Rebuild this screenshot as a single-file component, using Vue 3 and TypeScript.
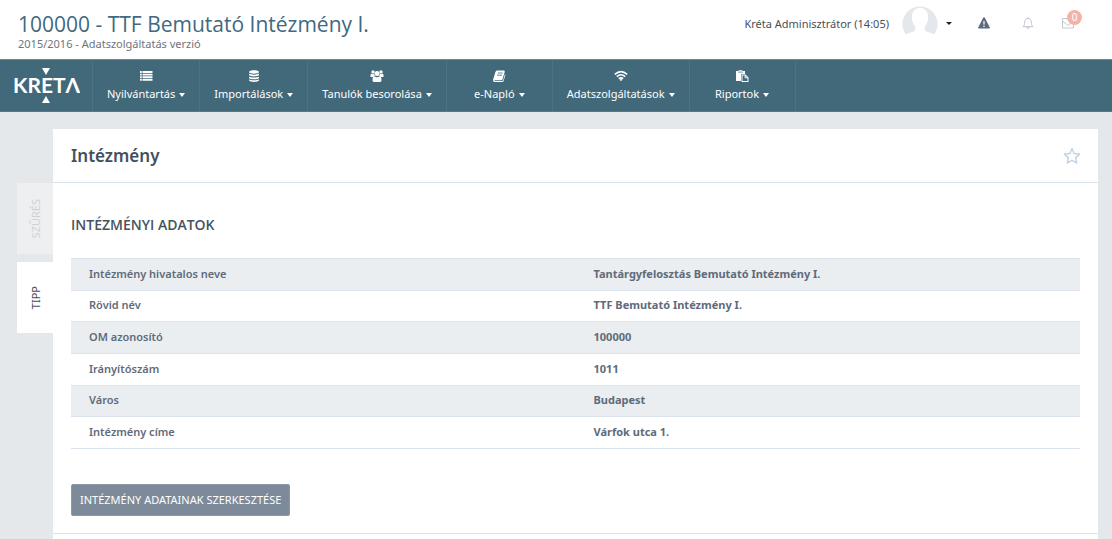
<script setup lang="ts">
interface MenuItem {
  label: string
  icon: string
}
interface Row {
  label: string
  value: string
}

const menu: MenuItem[] = [
  { label: 'Nyilvántartás', icon: 'list' },
  { label: 'Importálások', icon: 'database' },
  { label: 'Tanulók besorolása', icon: 'group' },
  { label: 'e-Napló', icon: 'book' },
  { label: 'Adatszolgáltatások', icon: 'wifi' },
  { label: 'Riportok', icon: 'paste' },
]

const rows: Row[] = [
  { label: 'Intézmény hivatalos neve', value: 'Tantárgyfelosztás Bemutató Intézmény I.' },
  { label: 'Rövid név', value: 'TTF Bemutató Intézmény I.' },
  { label: 'OM azonosító', value: '100000' },
  { label: 'Irányítószám', value: '1011' },
  { label: 'Város', value: 'Budapest' },
  { label: 'Intézmény címe', value: 'Várfok utca 1.' },
]
</script>

<template>
  <div class="page">
    <header class="top">
      <div class="school">
        <h1>100000 - TTF Bemutató Intézmény I.</h1>
        <p>2015/2016 - Adatszolgáltatás verzió</p>
      </div>
      <div class="tools">
        <button type="button" class="user">
          <span>Kréta Adminisztrátor (14:05)</span>
          <svg class="avatar" viewBox="0 0 36 36" aria-hidden="true">
            <path
              fill="#e4e8ed"
              d="M4 29.500A17.500 17.500 0 1 1 32 29.500C29 27.500 24 27 23 25.500C22 24 22.500 22 23.500 20.500C25 18.500 26.500 15 26 10.500C25.500 5.500 22 3 18 3C13.500 3 10.500 5.500 10 10.500C9.500 15 11 18.500 12.500 20.500C13.500 22 14 24 13 25.500C12 27 7 27.500 4 29.500Z"
            />
          </svg>
          <i class="caret dark"></i>
        </button>
        <button type="button" class="tool warn" aria-label="Figyelmeztetések">
          <svg viewBox="0 0 12 12">
            <path fill="#5b6b7d" d="M6 0.300Q6.500 0.300 6.800 0.800L11.800 10.400Q12 11.500 11 11.600H1Q0 11.500 0.200 10.400L5.200 0.800Q5.500 0.300 6 0.300Z" />
            <path fill="#fff" d="M5.200 4.200H6.800L6.500 7.800H5.500ZM5.300 8.700H6.700V10.100H5.300Z" />
          </svg>
        </button>
        <button type="button" class="tool" aria-label="Értesítések">
          <svg viewBox="0 0 12 12" fill="none" stroke="#b9bfc7" stroke-width="0.900">
            <path d="M1 9.700C2.400 8.400 2.700 7 2.700 5C2.700 2.600 4.200 1.500 6 1.500C7.800 1.500 9.300 2.600 9.300 5C9.300 7 9.600 8.400 11 9.700ZM6 0.200V1.500M4.700 9.900Q4.900 11.400 6 11.400Q7.100 11.400 7.300 9.900" />
          </svg>
        </button>
        <button type="button" class="tool mail" aria-label="Üzenetek">
          <svg viewBox="0 0 12 12" fill="none" stroke="#c3c8cf" stroke-width="1">
            <path d="M0.500 1.500H11.500V11H0.500ZM0.500 4L6 8.500L11.500 4" />
          </svg>
          <span class="badge">0</span>
        </button>
      </div>
    </header>

    <nav class="bar">
      <a href="#" class="logo" aria-label="Kréta">
        <svg viewBox="0 0 67 36">
          <path fill="#fff" d="M29 0H37L33 7ZM33 28L37 35H29Z" />
          <text x="0" y="25" class="brand">KRETΛ</text>
        </svg>
      </a>
      <a v-for="item in menu" :key="item.label" href="#" class="item">
        <svg class="glyph" viewBox="0 0 14 12" fill="#fff" aria-hidden="true">
          <path
            v-if="item.icon === 'list'"
            d="M1 1H2.800V3H1ZM3.500 1H13.500V3H3.500ZM1 3.700H2.800V5.500H1ZM3.500 3.700H13.500V5.500H3.500ZM1 6.200H2.800V8H1ZM3.500 6.200H13.500V8H3.500ZM1 8.700H2.800V10.700H1ZM3.500 8.700H13.500V10.700H3.500Z"
          />
          <path
            v-else-if="item.icon === 'database'"
            d="M2 2C2 -0.300 12 -0.300 12 2C12 4.300 2 4.300 2 2ZM2 3.600C3.500 5 10.500 5 12 3.600V5C11.500 6.900 2.500 6.900 2 5ZM2 6.500C3.500 7.900 10.500 7.900 12 6.500V7.900C11.500 9.800 2.500 9.800 2 7.900ZM2 9.300C3.500 10.700 10.500 10.700 12 9.300V10.300C11.500 12.500 2.500 12.500 2 10.300Z"
          />
          <g v-else-if="item.icon === 'group'">
            <circle cx="3" cy="1.900" r="1.700" />
            <circle cx="11" cy="1.900" r="1.700" />
            <circle cx="7" cy="3.500" r="2.500" />
            <path d="M0.500 7V5Q0.700 3.700 1.700 3.800Q3 4.500 4 3.800Q4.300 5.200 4.800 5.900Q3.600 6 3 7ZM13.500 7V5Q13.300 3.700 12.300 3.800Q11 4.500 10 3.800Q9.700 5.200 9.200 5.900Q10.400 6 11 7ZM4.500 6.300Q7 8 9.500 6.300Q11.500 6.500 11.500 10.300Q11.500 12 10 12H4Q2.500 12 2.500 10.300Q2.500 6.500 4.500 6.300Z" />
          </g>
          <g v-else-if="item.icon === 'book'">
            <path d="M5 0.500H12Q13 0.800 12.700 2L10.400 9.500Q10 10.300 9.200 10.300H2.900Q2 10.500 2.500 11H9.900Q10.900 11 11.200 10L13 4Q13.600 4.700 13.200 5.700L11.600 11Q11.200 12 10 12H2.700Q0.800 11.800 1 10L3.400 2Q3.900 0.500 5 0.500Z" />
            <path stroke="#41697a" stroke-width="0.800" d="M5.700 3H10.700M5 5.200H10" />
          </g>
          <g v-else-if="item.icon === 'wifi'">
            <g fill="none" stroke="#fff" stroke-width="1.600">
              <path d="M0.800 4.400Q7 -1.200 13.200 4.400M2.800 6.600Q7 2.900 11.200 6.600M4.800 8.700Q7 7 9.200 8.700" />
            </g>
            <path d="M5.500 9.600Q7 8.600 8.500 9.600L7 11.200Z" />
          </g>
          <g v-else>
            <path d="M1 1H3.500V0.300H7.500V1H10V4H6V11H1Z" />
            <path stroke="#41697a" stroke-width="0.700" d="M3 2.100H8" />
            <path fill-rule="evenodd" d="M6.500 4.500H10.500L13.500 7.500V12H6.500ZM7.500 5.500V11H12.500V8.300H9.700V5.500ZM10.600 6V7.500H12Z" />
          </g>
        </svg>
        <span class="name">{{ item.label }}<i class="caret"></i></span>
      </a>
    </nav>

    <main class="content">
      <div class="tabs">
        <button type="button" class="tab" disabled><span>SZŰRÉS</span></button>
        <button type="button" class="tab active"><span>TIPP</span></button>
      </div>
      <section class="card">
        <div class="card-head">
          <h2>Intézmény</h2>
          <button type="button" class="star" aria-label="Kedvenc">
            <svg viewBox="0 0 18 18" fill="none" stroke="#c3d3e3" stroke-width="1.500" stroke-linejoin="round">
              <path d="M9 1.700L11.200 6.500L16.600 7.100L12.600 10.700L13.700 15.900L9 13.300L4.300 15.900L5.400 10.700L1.400 7.100L6.800 6.500Z" />
            </svg>
          </button>
        </div>
        <div class="card-body">
          <h3>INTÉZMÉNYI ADATOK</h3>
          <table>
            <tbody>
              <tr v-for="row in rows" :key="row.label">
                <th scope="row">{{ row.label }}</th>
                <td>{{ row.value }}</td>
              </tr>
            </tbody>
          </table>
          <button type="button" class="edit">INTÉZMÉNY ADATAINAK SZERKESZTÉSE</button>
        </div>
      </section>
    </main>
  </div>
</template>

<style>
body {
  margin: 0;
  background: #e4e8eb;
}
</style>

<style scoped>
.page {
  display: flex;
  flex-direction: column;
  min-height: 100vh;
  font-family: "Noto Sans", "Open Sans", sans-serif;
  font-size: 11px;
  color: #5f6b7a;
}
h1, h2, h3, p {
  margin: 0;
}
button {
  border: 0;
  padding: 0;
  background: none;
  font: inherit;
  color: inherit;
}
svg {
  display: block;
}
.top {
  display: flex;
  justify-content: space-between;
  box-sizing: border-box;
  height: 59px;
  padding: 0 38px 0 18px;
  background: #fff;
}
.school {
  padding-top: 11px;
}
h1 {
  font-family: "Open Sans", sans-serif;
  font-size: 21px;
  line-height: 27px;
  font-weight: 400;
  color: #41697f;
}
.school p {
  line-height: 12px;
  color: #6e7480;
}
.tools {
  display: flex;
  align-items: center;
  height: 46px;
}
.user {
  display: flex;
  align-items: center;
  color: #4a4f55;
}
.avatar {
  width: 36px;
  height: 36px;
  margin: 0 8px 0 13px;
}
.caret {
  display: inline-block;
  border: 3px solid transparent;
  border-top: 4px solid #fff;
  border-bottom: 0;
  margin-left: 4px;
  vertical-align: 1px;
}
.caret.dark {
  border-top: 3px solid #222;
  margin-left: 0;
}
.tool {
  position: relative;
  margin-left: 32px;
}
.tool.warn {
  margin-left: 26px;
}
.tool.mail {
  margin-left: 28px;
}
.tool svg {
  width: 12px;
  height: 12px;
}
.badge {
  position: absolute;
  left: 5px;
  top: -7px;
  width: 15px;
  height: 15px;
  border-radius: 50%;
  background: #f3b3ab;
  color: #fff;
  font-size: 10px;
  line-height: 14px;
}
.bar {
  display: flex;
  box-sizing: border-box;
  height: 53px;
  border-top: 1px solid #6a8a99;
  border-bottom: 1px solid #55798a;
  background: #41697a;
}
.logo {
  padding: 8px 12px 0 13px;
  border-right: 1px solid #4c7284;
}
.logo svg {
  width: 67px;
  height: 36px;
}
.brand {
  fill: #fff;
  font-family: Lato, sans-serif;
  font-weight: 700;
  font-size: 21px;
}
.item {
  display: flex;
  flex-direction: column;
  align-items: center;
  box-sizing: border-box;
  min-width: 106px;
  padding: 10px 14px 0;
  border-right: 1px solid #4c7284;
  color: #fff;
  text-decoration: none;
  white-space: nowrap;
}
.glyph {
  width: 14px;
  height: 12px;
}
.name {
  margin-top: 3px;
  line-height: 17px;
}
.content {
  display: flex;
  flex: 1;
  padding: 17px 14px 0 17px;
}
.tabs {
  width: 36px;
  padding-top: 54px;
}
.tab {
  display: flex;
  align-items: center;
  justify-content: center;
  width: 36px;
  height: 71px;
  margin-bottom: 8px;
  background: #edeff0;
  color: #ced3da;
}
.tab.active {
  background: #fff;
  color: #4a4f55;
}
.tab span {
  writing-mode: vertical-rl;
  transform: rotate(180deg);
}
.card {
  flex: 1;
  background: #fff;
}
.card-head {
  display: flex;
  align-items: center;
  justify-content: space-between;
  box-sizing: border-box;
  height: 54px;
  padding: 0 17px 0 18px;
  border-bottom: 1px solid #dbe4ee;
}
h2 {
  font-size: 17px;
  font-weight: 600;
  color: #424f5e;
}
.star svg {
  width: 18px;
  height: 18px;
}
.card-body {
  padding: 32px 18px 17px 18px;
  border-bottom: 1px solid #dbe4ee;
}
h3 {
  font-family: "Open Sans", sans-serif;
  font-size: 14px;
  line-height: 20px;
  font-weight: 600;
  color: #46535f;
}
table {
  width: 100%;
  height: 191px;
  margin: 23px 0 35px;
  border-collapse: collapse;
  table-layout: fixed;
}
tr {
  border-top: 1px solid #dbe4ee;
  border-bottom: 1px solid #dbe4ee;
}
tr:nth-child(odd) {
  background: #eaeef1;
}
th, td {
  padding: 0 18px 2px;
  text-align: left;
  line-height: 17px;
}
th {
  font-weight: 600;
}
td {
  font-weight: 700;
}
.edit {
  height: 32px;
  padding: 0 8px 2px;
  border: 1px solid #8b98a7;
  border-radius: 2px;
  background: #7d8a9a;
  color: #fff;
}
</style>
